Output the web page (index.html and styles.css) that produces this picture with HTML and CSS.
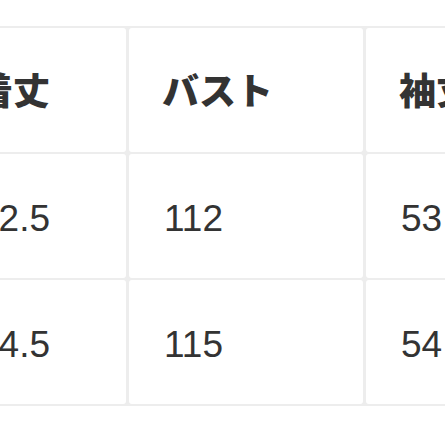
FILE: index.html
```html
<!DOCTYPE html>
<html lang="ja">
<head>
<meta charset="utf-8">
<link rel="stylesheet" href="styles.css">
</head>
<body>
<div class="size-table">
  <div class="cell head">着丈</div>
  <div class="cell head">バスト</div>
  <div class="cell head">袖丈</div>
  <div class="cell num">62.5</div>
  <div class="cell num">112</div>
  <div class="cell num">53</div>
  <div class="cell num">64.5</div>
  <div class="cell num">115</div>
  <div class="cell num">54</div>
</div>
</body>
</html>
```
FILE: styles.css
```css
html, body {
  margin: 0;
  padding: 0;
  background: #ffffff;
  overflow: hidden;
}
.size-table {
  display: grid;
  grid-template-columns: 183px 234px 240px;
  grid-auto-rows: 124px;
  column-gap: 3px;
  row-gap: 2px;
  padding: 2px 0;
  margin-top: 26px;
  margin-left: -57px;
  width: 666px;
  background: #ededed;
}
.cell {
  background: #ffffff;
  border-radius: 3px;
  display: flex;
  align-items: center;
  padding: 0 0 0 33px;
  box-sizing: border-box;
  color: #333333;
  white-space: nowrap;
}
.head {
  font-family: "Noto Sans CJK JP", "Noto Sans", sans-serif;
  font-weight: 900;
  font-size: 37px;
  padding-bottom: 2px;
}
.num {
  font-family: "Liberation Sans", Arial, sans-serif;
  font-size: 37px;
  padding-top: 6px;
  padding-left: 35px;
}
```
